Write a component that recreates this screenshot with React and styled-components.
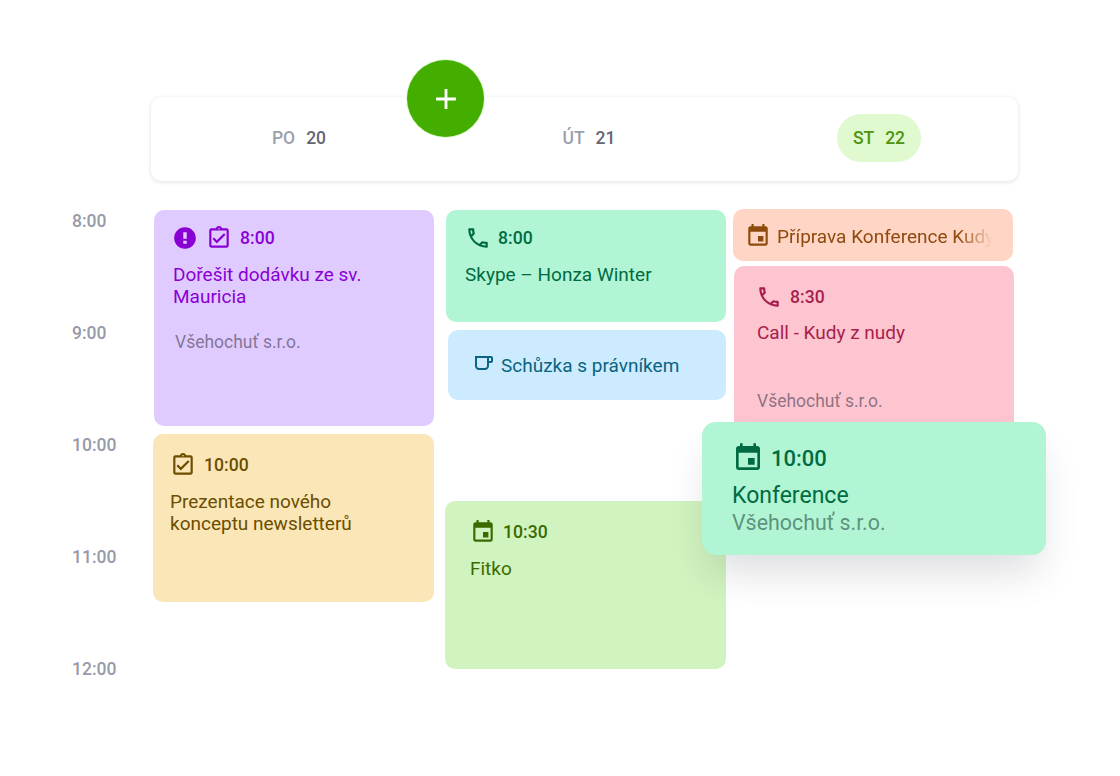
import React from 'react';
import styled, { createGlobalStyle } from 'styled-components';

const GlobalStyle = createGlobalStyle`
  html, body {
    margin: 0;
    padding: 0;
    background: #fff;
    font-family: Roboto, "Liberation Sans", sans-serif;
  }
`;

const Page = styled.div`
  position: relative;
  width: 1120px;
  height: 776px;
  padding: 97px 0 0 0;
  box-sizing: border-box;
  overflow: hidden;
`;

const Header = styled.div`
  position: relative;
  display: grid;
  grid-template-columns: repeat(3, 290px);
  align-items: center;
  box-sizing: border-box;
  width: 867px;
  height: 84px;
  margin-left: 151px;
  padding: 0 0 2px 3px;
  border-radius: 10px;
  background: #fff;
  box-shadow: 0 1px 4px rgba(40, 50, 70, 0.16);
`;

const AddButton = styled.button`
  position: absolute;
  left: 256px;
  top: -37px;
  display: flex;
  align-items: center;
  justify-content: center;
  width: 77px;
  height: 77px;
  padding: 0;
  border: none;
  border-radius: 50%;
  background: #43ae00;
  color: #fff;
  box-shadow: 0 0 0 1px #e4f8d4;
`;

const DayCell = styled.div`
  display: flex;
  justify-content: center;
`;

const Day = styled.div`
  display: flex;
  align-items: center;
  justify-content: center;
  gap: 11px;
  height: 48px;
  padding: 0 16px;
  border-radius: 24px;
  font-size: 17.5px;
  font-weight: 500;
  background: ${(p) => (p.$active ? '#e0f9ce' : 'transparent')};
`;

const DayName = styled.span`
  color: ${(p) => (p.$active ? '#4f9410' : '#9ba0ac')};
`;

const DayNumber = styled.span`
  color: ${(p) => (p.$active ? '#4f9410' : '#64676f')};
`;

const Body = styled.div`
  display: flex;
  margin-top: 28px;
  padding-left: 72px;
`;

const TimeColumn = styled.div`
  width: 81px;
`;

const TimeLabel = styled.div`
  height: 112px;
  font-size: 17.5px;
  font-weight: 500;
  line-height: 24px;
  color: #969ba8;
`;

const Column = styled.div`
  position: relative;
  display: flex;
  flex-direction: column;
  width: 281px;
  margin-left: ${(p) => p.$offset || 0}px;
`;

const Event = styled.div`
  box-sizing: border-box;
  height: ${(p) => p.$height}px;
  margin-top: ${(p) => p.$top || 0}px;
  margin-left: ${(p) => p.$inset || 0}px;
  margin-right: ${(p) => p.$outset || 0}px;
  padding: ${(p) => p.$padding || '16px 20px'};
  border-radius: 10px;
  background: ${(p) => p.$bg};
  color: ${(p) => p.$color};
  overflow: hidden;
`;

const MetaRow = styled.div`
  display: flex;
  align-items: center;
  gap: ${(p) => p.$gap || 8}px;
  height: 26px;
  margin-left: ${(p) => p.$shift || 0}px;
  font-size: 17.6px;
  font-weight: 500;
`;

const Title = styled.div`
  max-width: 225px;
  margin-top: ${(p) => p.$top || 13}px;
  font-size: 19px;
  line-height: 22px;
`;

const Company = styled.div`
  margin-top: ${(p) => p.$top || 23}px;
  margin-left: ${(p) => p.$shift || 0}px;
  font-size: 17.5px;
  line-height: 22px;
  color: rgba(70, 60, 80, 0.62);
`;

const InlineRow = styled.div`
  display: flex;
  align-items: center;
  gap: 6px;
  height: 100%;
  font-size: 19px;
`;

const FadedText = styled.div`
  flex: 1;
  white-space: nowrap;
  overflow: hidden;
  -webkit-mask-image: linear-gradient(to right, #000 84%, transparent 100%);
  mask-image: linear-gradient(to right, #000 84%, transparent 100%);
`;

const FloatingCard = styled.div`
  position: absolute;
  left: -31px;
  top: 213px;
  box-sizing: border-box;
  width: 344px;
  height: 133px;
  padding: 21px 30px;
  border-radius: 14px;
  background: #b1f5d4;
  color: #006b43;
  box-shadow: 0 24px 40px -8px rgba(30, 40, 50, 0.16);
`;

const FloatingTime = styled.div`
  display: flex;
  align-items: center;
  gap: 7px;
  height: 30px;
  font-size: 22px;
  font-weight: 500;
`;

const FloatingTitle = styled.div`
  margin-top: 10px;
  font-size: 23px;
  line-height: 26px;
`;

const FloatingCompany = styled.div`
  font-size: 21.4px;
  line-height: 28px;
  color: rgba(40, 80, 70, 0.62);
`;

const Icon = ({ d, size = 26 }) => (
  <svg width={size} height={size} viewBox="0 0 24 24" fill="currentColor" style={{ flex: 'none' }}>
    <path d={d} />
  </svg>
);

const CALENDAR = 'M17 12h-5v5h5v-5zM16 1v2H8V1H6v2H5c-1.11 0-1.99.9-1.99 2L3 19c0 1.1.89 2 2 2h14c1.1 0 2-.9 2-2V5c0-1.1-.9-2-2-2h-1V1h-2zm3 18H5V8h14v11z';
const TASK = 'M18 9l-1.41-1.42L10 14.17l-2.59-2.58L6 13l4 4zm1-6h-4.18C14.4 1.84 13.3 1 12 1c-1.3 0-2.4.84-2.82 2H5c-.14 0-.27.01-.4.04-.39.08-.74.28-1.01.55-.18.18-.33.4-.43.64-.1.23-.16.49-.16.77v14c0 .27.06.54.16.78s.25.45.43.64c.27.27.62.47 1.01.55.13.02.26.03.4.03h14c1.1 0 2-.9 2-2V5c0-1.1-.9-2-2-2zm-7-.25c.41 0 .75.34.75.75s-.34.75-.75.75-.75-.34-.75-.75.34-.75.75-.75zM19 19H5V5h14v14z';
const PHONE = 'M6.54 5c.06.89.21 1.76.45 2.59l-1.2 1.2c-.41-1.2-.67-2.47-.76-3.79h1.51m9.86 12.02c.85.24 1.72.39 2.6.45v1.49c-1.32-.09-2.59-.35-3.8-.75l1.2-1.19M7.5 3H4c-.55 0-1 .45-1 1 0 9.39 7.61 17 17 17 .55 0 1-.45 1-1v-3.49c0-.55-.45-1-1-1-1.24 0-2.45-.2-3.57-.57-.1-.04-.21-.05-.31-.05-.26 0-.51.1-.71.29l-2.2 2.2c-2.83-1.45-5.15-3.76-6.59-6.59l2.2-2.2c.28-.28.36-.67.25-1.02C8.7 6.45 8.5 5.25 8.5 4c0-.55-.45-1-1-1z';
const CUP = 'M20 3H4v10c0 2.21 1.79 4 4 4h6c2.21 0 4-1.79 4-4v-3h2c1.11 0 2-.89 2-2V5c0-1.11-.89-2-2-2zm-4 10c0 1.1-.9 2-2 2H8c-1.1 0-2-.9-2-2V5h10v8zm4-5h-2V5h2v3z';
const ALERT = 'M12 2C6.48 2 2 6.48 2 12s4.48 10 10 10 10-4.48 10-10S17.52 2 12 2zm1.6 15.2h-3.2v-2.6h3.2v2.6zm0-4.4h-3.2V6.8h3.2v6z';
const PLUS = 'M19 13h-6v6h-2v-6H5v-2h6V5h2v6h6v2z';

const days = [
  { name: 'PO', number: 20 },
  { name: 'ÚT', number: 21 },
  { name: 'ST', number: 22, active: true },
];

const hours = ['8:00', '9:00', '10:00', '11:00', '12:00'];

export default function App() {
  return (
    <Page>
      <GlobalStyle />
      <Header>
        {days.map((day) => (
          <DayCell key={day.name}>
            <Day $active={day.active}>
              <DayName $active={day.active}>{day.name}</DayName>
              <DayNumber $active={day.active}>{day.number}</DayNumber>
            </Day>
          </DayCell>
        ))}
        <AddButton aria-label="Přidat">
          <Icon d={PLUS} size={34} />
        </AddButton>
      </Header>

      <Body>
        <TimeColumn>
          {hours.map((hour) => (
            <TimeLabel key={hour}>{hour}</TimeLabel>
          ))}
        </TimeColumn>

        <Column>
          <Event $top={1} $inset={1} $height={216} $bg="#dfcbff" $color="#8a00d4" $padding="15px 19px">
            <MetaRow $shift={-1}>
              <Icon d={ALERT} />
              <Icon d={TASK} />
              <span>8:00</span>
            </MetaRow>
            <Title>Dořešit dodávku ze sv. Mauricia</Title>
            <Company $shift={2}>Všehochuť s.r.o.</Company>
          </Event>
          <Event $top={8} $height={168} $bg="#fbe6b7" $color="#6b4e00" $padding="18px 17px">
            <MetaRow>
              <Icon d={TASK} />
              <span>10:00</span>
            </MetaRow>
            <Title>Prezentace nového konceptu newsletterů</Title>
          </Event>
        </Column>

        <Column $offset={11}>
          <Event $top={1} $inset={1} $height={112} $bg="#b1f5d4" $color="#006b43" $padding="15px 19px">
            <MetaRow $gap={7}>
              <Icon d={PHONE} />
              <span>8:00</span>
            </MetaRow>
            <Title>Skype – Honza Winter</Title>
          </Event>
          <Event $top={8} $inset={3} $height={70} $bg="#ccebff" $color="#0b6480" $padding="0 23px">
            <InlineRow>
              <Icon d={CUP} size={24} />
              <span>Schůzka s právníkem</span>
            </InlineRow>
          </Event>
          <Event $top={101} $height={168} $bg="#d1f3bf" $color="#3a6b00" $padding="18px 25px">
            <MetaRow $gap={7}>
              <Icon d={CALENDAR} />
              <span>10:30</span>
            </MetaRow>
            <Title>Fitko</Title>
          </Event>
        </Column>

        <Column $offset={7}>
          <Event $outset={1} $height={52} $bg="#ffd5c5" $color="#8f4a0e" $padding="2px 21px 0 12px">
            <InlineRow>
              <Icon d={CALENDAR} />
              <FadedText>Příprava Konference Kudy</FadedText>
            </InlineRow>
          </Event>
          <Event $top={5} $inset={1} $height={168} $bg="#fdc5d0" $color="#a81e4d" $padding="18px 23px">
            <MetaRow $shift={-1}>
              <Icon d={PHONE} />
              <span>8:30</span>
            </MetaRow>
            <Title $top={12}>Call - Kudy z nudy</Title>
            <Company $top={46}>Všehochuť s.r.o.</Company>
          </Event>
          <FloatingCard>
            <FloatingTime>
              <Icon d={CALENDAR} size={32} />
              <span>10:00</span>
            </FloatingTime>
            <FloatingTitle>Konference</FloatingTitle>
            <FloatingCompany>Všehochuť s.r.o.</FloatingCompany>
          </FloatingCard>
        </Column>
      </Body>
    </Page>
  );
}
